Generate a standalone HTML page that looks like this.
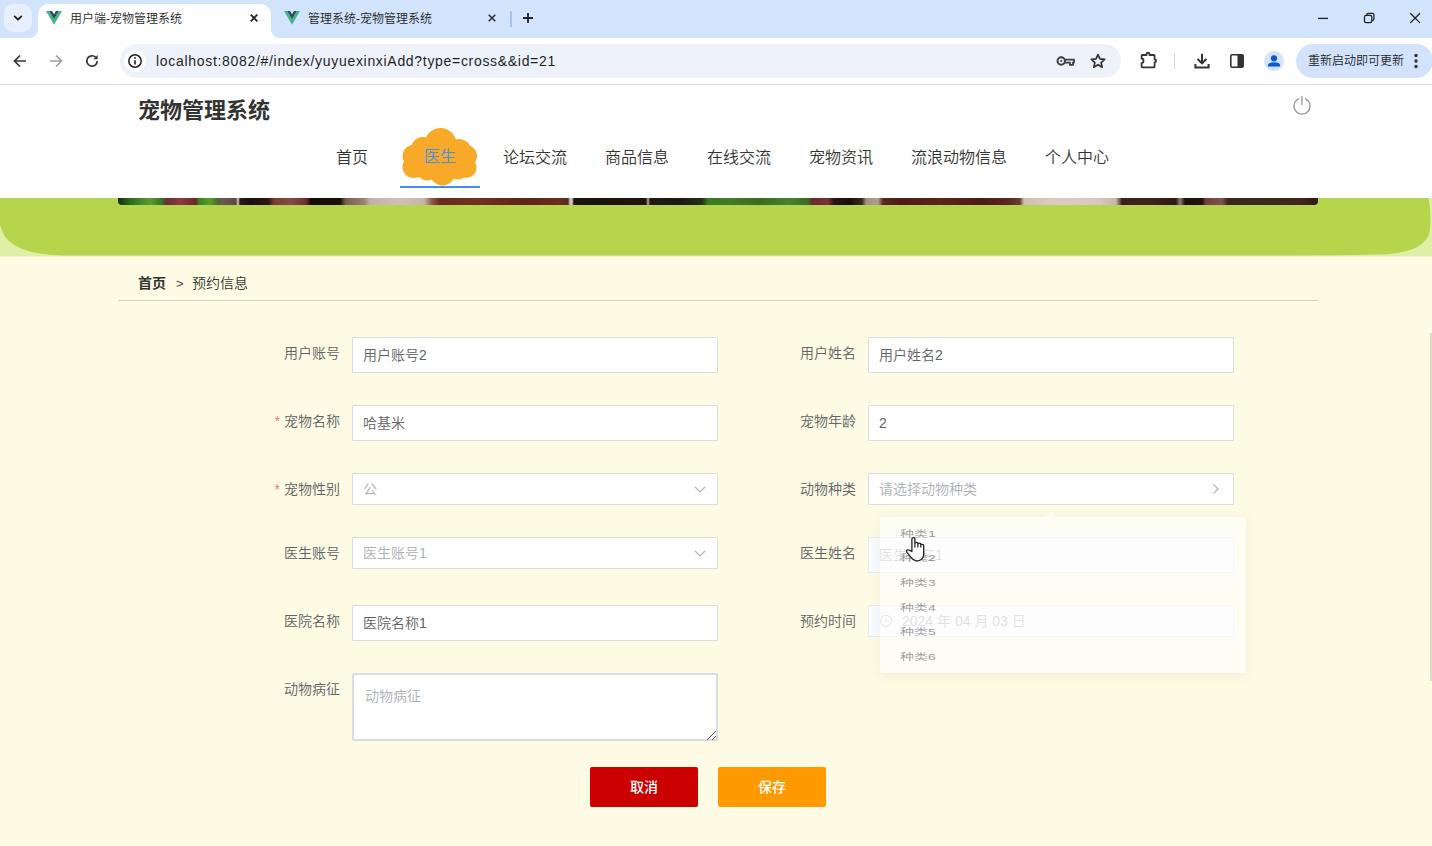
<!DOCTYPE html>
<html lang="zh-CN">
<head>
<meta charset="utf-8">
<title>用户端-宠物管理系统</title>
<style>
*{box-sizing:border-box;margin:0;padding:0}
html,body{width:1432px;height:846px;overflow:hidden;background:#fdfbe4}
body{font-family:"Liberation Sans","Noto Sans CJK SC",sans-serif;color:#606266;position:relative;font-weight:350}
.abs{position:absolute}
/* ---------- browser chrome ---------- */
#tabstrip{left:0;top:0;width:1432px;height:38px;background:#d2e3fc}
#tabbtn{left:4px;top:4px;width:28px;height:28px;border-radius:9px;background:#e7effc}
#tab1{left:38px;top:4px;width:232.5px;height:34px;background:#fff;border-radius:10px 10px 0 0}
#tab1:before,#tab1:after{content:"";position:absolute;bottom:0;width:10px;height:10px}
#tab1:before{left:-10px;background:radial-gradient(circle at 0 0,transparent 10px,#fff 10.5px)}
#tab1:after{right:-10px;background:radial-gradient(circle at 100% 0,transparent 10px,#fff 10.5px)}
.tabtxt{top:10px;font-size:12px;line-height:18px;color:#1f1f1f;white-space:nowrap}
#toolbar{left:0;top:38px;width:1432px;height:47px;background:#fff;border-bottom:1px solid #dadce0}
#omni{left:120px;top:44px;width:1001px;height:34px;border-radius:17px;background:#edf2fa}
#infoc{left:124px;top:50px;width:22px;height:22px;border-radius:11px;background:#fff}
#url{left:156px;top:51px;font-size:14px;line-height:20px;color:#1f1f1f;white-space:nowrap;letter-spacing:0.69px}
#upd{left:1296px;top:44px;width:137px;height:34px;border-radius:17px;background:#d3e3fd}
#updt{left:1308px;top:52px;font-size:12px;line-height:18px;color:#1f1f1f;white-space:nowrap}
/* ---------- page ---------- */
#header{left:0;top:85px;width:1432px;height:113px;background:#fff}
#title{left:138px;top:95px;font-size:22px;line-height:32px;font-weight:bold;color:#333;white-space:nowrap}
.nav{top:146px;font-size:16px;line-height:24px;color:#333;white-space:nowrap;font-weight:350}
#green{left:0;top:198px;width:1432px;height:60px;background:#dff0a6}
#strip{left:118px;top:198px;width:1200px;height:7px;border-radius:0 0 4px 4px;background:linear-gradient(90deg,#16300c 0px,#2f6a1a 12px,#5a9a34 32px,#3a7020 44px,#6a3030 48px,#8a3a40 62px,#6a2a2a 78px,#3f8020 81px,#5a9a30 92px,#4a6a30 100px,#6a5a50 104px,#5a4a44 118px,#d8d0c8 120px,#2a1a18 122px,#1a1010 132px,#2a1616 150px,#7a3a35 156px,#8a4a44 172px,#6a3030 188px,#140a08 193px,#1a100c 222px,#7a6050 228px,#9a8070 246px,#c0b0a8 252px,#cfc0b8 282px,#c8b4a8 306px,#8a5a48 314px,#6a2a1c 322px,#74301f 362px,#5e2416 402px,#6a2c1c 442px,#5a2a20 450px,#d0c6bc 452px,#d0c6bc 454px,#1c1410 456px,#1a120e 482px,#20160f 528px,#b8b0a0 530px,#221a14 532px,#1c1812 562px,#24301a 584px,#3a7a20 590px,#427a28 612px,#3a6c22 642px,#4a8030 672px,#3c6a24 690px,#6a2a30 694px,#7a3038 710px,#2a1212 716px,#1c0e0c 732px,#3a2a20 744px,#a09080 748px,#b0a090 760px,#5a2a20 765px,#4a1c14 782px,#5c241a 822px,#4a1c16 862px,#5a2a20 892px,#6a4030 902px,#d0c0b0 906px,#dccdc4 942px,#d8c8c0 982px,#c8b4a8 998px,#3a2020 1004px,#40201c 1032px,#30181a 1058px,#8a8078 1062px,#1c1010 1067px,#241212 1084px,#7a4040 1088px,#805050 1104px,#3a2520 1110px,#3a2a20 1152px,#40281e 1182px,#301a14 1200px)}
#crumb{left:138px;top:273px;font-size:14px;line-height:20px;color:#333;white-space:nowrap}
#crumbline{left:118px;top:300px;width:1200px;height:1px;background:#d3d3bd}
.lab{width:140px;text-align:right;font-size:14px;line-height:32px;color:#606266;white-space:nowrap}
.lab i{color:#f27878;font-style:normal;margin-right:4px}
.inp{background:#fff;border:1px solid #d9dbdd;border-radius:1px;font-size:14px;color:#606266;padding-left:10px;white-space:nowrap}
.h36{height:36px;line-height:34px}
.h32{height:32px;line-height:30px}
.ph{color:#adb0b6}
.btn{top:767px;width:108px;height:40px;border-radius:2px;color:#fff;font-size:14px;line-height:40px;text-align:center;font-weight:500}
#dd{left:880px;top:517px;width:366px;height:156px;background:#fff;opacity:.62;border-radius:3px;box-shadow:0 2px 12px rgba(0,0,0,.09)}
#dd div{position:absolute;left:20px;font-size:14px;line-height:20px;color:#606266;transform:scaleY(.69);white-space:nowrap}
</style>
</head>
<body>
<!-- ===== tab strip ===== -->
<div id="tabstrip" class="abs"></div>
<div id="tabbtn" class="abs"></div>
<svg class="abs" style="left:11px;top:13px" width="14" height="10" viewBox="0 0 14 10"><path d="M3.7 3.4 L7 6.7 L10.3 3.4" fill="none" stroke="#1f1f1f" stroke-width="1.8" stroke-linecap="round" stroke-linejoin="round"/></svg>
<div id="tab1" class="abs"></div>
<svg class="abs" style="left:46px;top:11px" width="16" height="14" viewBox="0 0 16 14"><path d="M0 0 H3.2 L8 8.3 L12.8 0 H16 L8 13.8 Z" fill="#41b883"/><path d="M3.2 0 H6.1 L8 3.3 L9.9 0 H12.8 L8 8.3 Z" fill="#35495e"/></svg>
<div class="abs tabtxt" style="left:70px">用户端-宠物管理系统</div>
<svg class="abs" style="left:248px;top:12px" width="12" height="12" viewBox="0 0 12 12"><path d="M2.7 2.7 L9.3 9.3 M9.3 2.7 L2.7 9.3" stroke="#1f1f1f" stroke-width="1.7" fill="none"/></svg>
<svg class="abs" style="left:284px;top:11px" width="16" height="14" viewBox="0 0 16 14"><path d="M0 0 H3.2 L8 8.3 L12.8 0 H16 L8 13.8 Z" fill="#41b883"/><path d="M3.2 0 H6.1 L8 3.3 L9.9 0 H12.8 L8 8.3 Z" fill="#35495e"/></svg>
<div class="abs tabtxt" style="left:308px">管理系统-宠物管理系统</div>
<svg class="abs" style="left:486px;top:12px" width="12" height="12" viewBox="0 0 12 12"><path d="M2.7 2.7 L9.3 9.3 M9.3 2.7 L2.7 9.3" stroke="#333" stroke-width="1.6" fill="none"/></svg>
<div class="abs" style="left:510px;top:11px;width:1.5px;height:16px;background:#a9c4f3"></div>
<svg class="abs" style="left:521px;top:11px" width="14" height="14" viewBox="0 0 14 14"><path d="M7 2 V12 M2 7 H12" stroke="#1f1f1f" stroke-width="1.8" fill="none"/></svg>
<!-- window controls -->
<svg class="abs" style="left:1316px;top:12px" width="14" height="12" viewBox="0 0 14 12"><path d="M2.1 6.4 H12" stroke="#1f1f1f" stroke-width="1.3"/></svg>
<svg class="abs" style="left:1362px;top:11px" width="14" height="14" viewBox="0 0 14 14"><rect x="2.5" y="4.4" width="7.3" height="7.3" rx="1.6" fill="none" stroke="#1f1f1f" stroke-width="1.25"/><path d="M4.7 4.2 V4 Q4.7 2.3 6.4 2.3 H10.2 Q11.9 2.3 11.9 4 V7.8 Q11.9 9.5 10.2 9.5 H10" fill="none" stroke="#1f1f1f" stroke-width="1.25"/></svg>
<svg class="abs" style="left:1408px;top:11px" width="14" height="14" viewBox="0 0 14 14"><path d="M2.3 2.2 L12 11.9 M12 2.2 L2.3 11.9" stroke="#1f1f1f" stroke-width="1.3" fill="none"/></svg>
<!-- ===== toolbar ===== -->
<div id="toolbar" class="abs"></div>
<svg class="abs" style="left:12px;top:53px" width="16" height="16" viewBox="0 0 16 16"><path d="M14 8 H3 M8 2.5 L2.5 8 L8 13.5" fill="none" stroke="#333" stroke-width="1.7" stroke-linejoin="miter"/></svg>
<svg class="abs" style="left:48px;top:53px" width="16" height="16" viewBox="0 0 16 16"><path d="M2 8 H13 M8 2.5 L13.5 8 L8 13.5" fill="none" stroke="#a0a0a0" stroke-width="1.7"/></svg>
<svg class="abs" style="left:84px;top:53px" width="16" height="16" viewBox="0 0 16 16"><path d="M13.2 8 A5.2 5.2 0 1 1 11.6 4.2" fill="none" stroke="#333" stroke-width="1.7"/><path d="M13.6 2 V6.2 H9.4 Z" fill="#333"/></svg>
<div id="omni" class="abs"></div>
<div id="infoc" class="abs"></div>
<svg class="abs" style="left:127px;top:53px" width="16" height="16" viewBox="0 0 16 16"><circle cx="8" cy="8" r="6.2" fill="none" stroke="#1f1f1f" stroke-width="1.5"/><path d="M8 7.2 V11.4" stroke="#1f1f1f" stroke-width="1.6"/><circle cx="8" cy="4.9" r="0.95" fill="#1f1f1f"/></svg>
<div id="url" class="abs">localhost:8082/#/index/yuyuexinxiAdd?type=cross&amp;&amp;id=21</div>
<!-- key -->
<svg class="abs" style="left:1056px;top:54px" width="20" height="14" viewBox="0 0 20 14"><circle cx="5.2" cy="7" r="3.7" fill="none" stroke="#3c3c3c" stroke-width="2"/><circle cx="5.2" cy="7" r="1.1" fill="#3c3c3c"/><path d="M9 5.7 H18 V8.6 H17 V10.9 H14 V8.6 H9" fill="none" stroke="#3c3c3c" stroke-width="1.8" stroke-linejoin="round"/></svg>
<!-- star -->
<svg class="abs" style="left:1090px;top:53px" width="16" height="16" viewBox="0 0 18 18"><path d="M9 1.8 L11.2 6.7 L16.5 7.2 L12.5 10.8 L13.7 16 L9 13.2 L4.3 16 L5.5 10.8 L1.5 7.2 L6.8 6.7 Z" fill="none" stroke="#333" stroke-width="1.9" stroke-linejoin="round"/></svg>
<!-- puzzle -->
<svg class="abs" style="left:1138px;top:50px" width="20" height="20" viewBox="0 0 20 20"><path d="M4.4 5 H8.5 Q8.5 2.7 10 2.7 Q11.5 2.7 11.5 5 H15.8 Q16.6 5 16.6 5.8 V9.3 Q18.1 9.3 18.1 10.8 Q18.1 12.3 16.6 12.3 V16.6 Q16.6 17.4 15.8 17.4 H4.4 Q3.6 17.4 3.6 16.6 V13.1 Q5.5 13.1 5.5 10.8 Q5.5 8.5 3.6 8.5 V5.8 Q3.6 5 4.4 5 Z" fill="none" stroke="#333" stroke-width="1.8" stroke-linejoin="round"/></svg>
<div class="abs" style="left:1174px;top:53px;width:1px;height:16px;background:#c7d7f0"></div>
<!-- download -->
<svg class="abs" style="left:1193px;top:52px" width="18" height="18" viewBox="0 0 18 18"><path d="M9 1.8 V11 M4.6 7 L9 11.4 L13.4 7" fill="none" stroke="#333" stroke-width="2"/><path d="M2.4 12 V15.4 H15.6 V12" fill="none" stroke="#333" stroke-width="2"/></svg>
<!-- side panel -->
<svg class="abs" style="left:1229px;top:53px" width="16" height="16" viewBox="0 0 16 16"><rect x="1.8" y="1.8" width="12.4" height="12.4" rx="1.2" fill="none" stroke="#333" stroke-width="1.6"/><rect x="8.5" y="2" width="5.5" height="12" fill="#333"/></svg>
<!-- avatar -->
<div class="abs" style="left:1264px;top:51px;width:20px;height:20px;border-radius:10px;background:#d3e3fd"></div>
<svg class="abs" style="left:1264px;top:51px" width="20" height="20" viewBox="0 0 20 20"><circle cx="10" cy="7.3" r="3.1" fill="#0b57d0"/><path d="M3.9 15.6 V14.6 Q3.9 11.3 10 11.3 Q16.1 11.3 16.1 14.6 V15.6 Z" fill="#0b57d0"/></svg>
<div id="upd" class="abs"></div>
<div id="updt" class="abs">重新启动即可更新</div>
<svg class="abs" style="left:1413px;top:52px" width="6" height="18" viewBox="0 0 6 18"><circle cx="3" cy="3.5" r="1.7" fill="#333"/><circle cx="3" cy="9" r="1.7" fill="#333"/><circle cx="3" cy="14.5" r="1.7" fill="#333"/></svg>

<!-- ===== page header ===== -->
<div id="header" class="abs"></div>
<div id="title" class="abs">宠物管理系统</div>
<svg class="abs" style="left:1291px;top:95px" width="22" height="22" viewBox="0 0 22 22"><path d="M7.5 3.9 A8 8 0 1 0 14.5 3.9" fill="none" stroke="#999" stroke-width="1.3" stroke-linecap="round"/><path d="M11 1.5 V9.6" stroke="#999" stroke-width="1.3" stroke-linecap="round"/></svg>
<!-- nav cloud -->
<svg class="abs" style="left:400px;top:126px" width="80" height="64" viewBox="0 0 80 64"><g fill="#f9a928"><circle cx="13.5" cy="30" r="11"/><circle cx="13.5" cy="41" r="11"/><circle cx="23" cy="23" r="12"/><circle cx="40.5" cy="18" r="16"/><circle cx="59" cy="25" r="12"/><circle cx="66" cy="30" r="11"/><circle cx="66" cy="41.5" r="10.5"/><circle cx="58" cy="44" r="9.5"/><circle cx="42.5" cy="47" r="12.5"/><circle cx="27" cy="45" r="9.5"/><circle cx="18" cy="43" r="8.5"/><rect x="10" y="22" width="60" height="26"/></g></svg>
<div class="abs" style="left:400px;top:186px;width:80px;height:2px;background:#3e90ea"></div>
<div class="abs nav" style="left:336px">首页</div>
<div class="abs nav" style="left:424px;color:#4a8fe0;top:145px">医生</div>
<div class="abs nav" style="left:503px">论坛交流</div>
<div class="abs nav" style="left:605px">商品信息</div>
<div class="abs nav" style="left:707px">在线交流</div>
<div class="abs nav" style="left:809px">宠物资讯</div>
<div class="abs nav" style="left:911px">流浪动物信息</div>
<div class="abs nav" style="left:1045px">个人中心</div>

<!-- ===== green band ===== -->
<div id="green" class="abs"></div>
<svg class="abs" style="left:0;top:198px" width="1432" height="62" viewBox="0 0 1432 62"><path d="M0 0 H1428.5 Q1431.5 14 1430 32 Q1427 53 1388 56.2 Q1340 57.6 1290 57.6 L62 57.6 Q30 56.5 14 47 Q3 40 0 27 Z" fill="#b5d64c"/><path d="M0 58.6 H1432 V62 H0 Z" fill="#fdfbe4"/></svg>
<div id="strip" class="abs"></div>

<!-- ===== breadcrumb ===== -->
<div id="crumb" class="abs"><b>首页</b><span style="margin:0 8.5px 0 10px;color:#444;font-size:13px">&gt;</span>预约信息</div>
<div id="crumbline" class="abs"></div>

<!-- ===== form left ===== -->
<div class="abs lab" style="left:200px;top:337px">用户账号</div>
<div class="abs inp h36" style="left:352px;top:337px;width:366px">用户账号2</div>
<div class="abs lab" style="left:200px;top:405px"><i>*</i>宠物名称</div>
<div class="abs inp h36" style="left:352px;top:405px;width:366px">哈基米</div>
<div class="abs lab" style="left:200px;top:473px"><i>*</i>宠物性别</div>
<div class="abs inp h32 ph" style="left:352px;top:473px;width:366px">公</div>
<div class="abs lab" style="left:200px;top:537px">医生账号</div>
<div class="abs inp h32 ph" style="left:352px;top:537px;width:366px">医生账号1</div>
<div class="abs lab" style="left:200px;top:605px">医院名称</div>
<div class="abs inp h36" style="left:352px;top:605px;width:366px">医院名称1</div>
<div class="abs lab" style="left:200px;top:673px">动物病征</div>
<div class="abs inp ph" style="left:352px;top:673px;width:366px;height:68px;border:2px solid #d9dde2;border-radius:2px;line-height:20px;padding:11px 0 0 11px">动物病征</div>
<svg class="abs" style="left:706px;top:729.5px" width="11" height="11" viewBox="0 0 11 11"><path d="M10 1 L1 10 M10 6 L6 10" stroke="#555" stroke-width="1" fill="none"/></svg>
<!-- select arrows -->
<svg class="abs" style="left:693px;top:485px" width="14" height="9" viewBox="0 0 14 9"><path d="M2 2 L7 7 L12 2" fill="none" stroke="#b0b3b9" stroke-width="1.2"/></svg>
<svg class="abs" style="left:693px;top:549px" width="14" height="9" viewBox="0 0 14 9"><path d="M2 2 L7 7 L12 2" fill="none" stroke="#b0b3b9" stroke-width="1.2"/></svg>

<!-- ===== form right ===== -->
<div class="abs lab" style="left:716px;top:337px">用户姓名</div>
<div class="abs inp h36" style="left:868px;top:337px;width:366px">用户姓名2</div>
<div class="abs lab" style="left:716px;top:405px">宠物年龄</div>
<div class="abs inp h36" style="left:868px;top:405px;width:366px">2</div>
<div class="abs lab" style="left:716px;top:473px">动物种类</div>
<div class="abs inp h32 ph" style="left:868px;top:473px;width:366px">请选择动物种类</div>
<svg class="abs" style="left:1211px;top:482px" width="9" height="14" viewBox="0 0 9 14"><path d="M2.5 2.5 L7 7 L2.5 11.5" fill="none" stroke="#b0b3b9" stroke-width="1.2"/></svg>
<div class="abs lab" style="left:716px;top:537px">医生姓名</div>
<div class="abs inp h36 ph" style="left:868px;top:537px;width:366px;background:#fafbfd;border-color:#e6e9ee">医生姓名1</div>
<div class="abs lab" style="left:716px;top:605px">预约时间</div>
<div class="abs inp h32 ph" style="left:868px;top:605px;width:366px;padding-left:33px;background:#fafbfd;border-color:#e6e9ee">2024 年 04 月 03 日</div>
<svg class="abs" style="left:879px;top:614px" width="14" height="14" viewBox="0 0 14 14"><circle cx="7" cy="7" r="5.6" fill="none" stroke="#c0c4cc" stroke-width="1.1"/><path d="M7 3.8 V7.2 H10" fill="none" stroke="#c0c4cc" stroke-width="1.1"/></svg>

<!-- ===== dropdown ===== -->
<div class="abs" style="left:1045px;top:511px;width:0;height:0;border:6px solid transparent;border-top:0;border-bottom-color:#fff;opacity:.75"></div>
<div id="dd" class="abs">
<div style="top:6.6px">种类1</div>
<div style="top:31.4px">种类2</div>
<div style="top:56.2px">种类3</div>
<div style="top:80.6px">种类4</div>
<div style="top:105.4px">种类5</div>
<div style="top:130.2px">种类6</div>
</div>
<!-- hand cursor -->
<svg class="abs" style="left:906px;top:537px" width="20" height="26" viewBox="0 0 20 26"><path d="M5.9 14.4 V2.2 Q5.9 0.7 7.4 0.7 Q8.9 0.7 8.9 2.2 V6.4 Q9.2 5.4 10.4 5.4 Q11.9 5.4 11.9 6.9 Q12.2 6.1 13.4 6.1 Q14.8 6.1 14.8 7.6 Q15.1 7.4 16.3 7.4 Q17.7 7.4 17.7 9 V17.4 Q17.7 20.8 15.2 22.5 Q12.6 24.2 9.8 23.7 Q6.8 23 4.8 20.2 L1 15.4 Q-0.1 13.8 1.1 13.1 Q2.2 12.6 3.4 13.3 Z" fill="#fff" stroke="#222" stroke-width="1.3" stroke-linejoin="round"/><path d="M8.9 6.4 V10.4 M11.9 6.9 V10.4 M14.8 7.6 V10.6" stroke="#222" stroke-width="1.2" fill="none"/></svg>

<!-- ===== buttons ===== -->
<div class="abs btn" style="left:590px;background:#cc0000">取消</div>
<div class="abs btn" style="left:718px;background:#ff9900">保存</div>
<!-- scrollbar -->
<div class="abs" style="left:1430px;top:333px;width:2px;height:348px;background:#dcdccb"></div>
</body>
</html>
